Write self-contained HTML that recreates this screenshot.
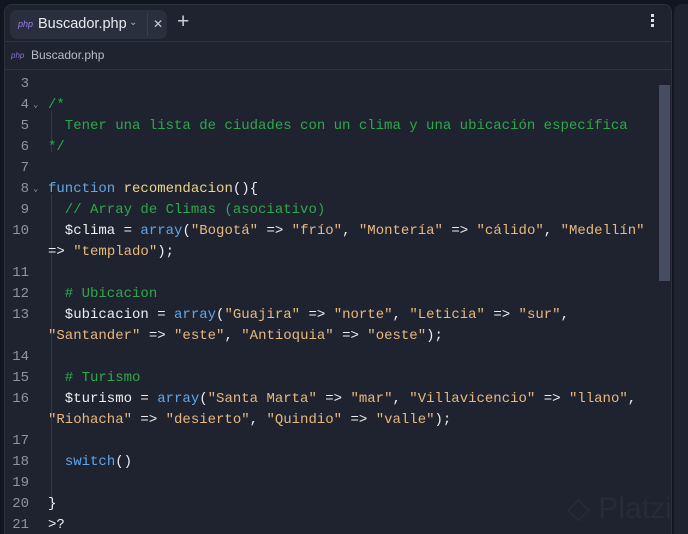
<!DOCTYPE html>
<html><head><meta charset="utf-8"><style>
html,body{margin:0;width:688px;height:534px;background:#11151f;overflow:hidden;position:relative;font-family:"Liberation Sans",sans-serif}
.panel{position:absolute;left:4px;top:4px;width:666px;height:540px;background:#1f2330;border:1px solid #2c3140;border-radius:8px;overflow:hidden}
.right{position:absolute;left:674px;top:4px;width:20px;height:540px;background:#1f2330;border-radius:8px}
.tabbar{position:absolute;left:0;top:0;width:666px;height:36px;border-bottom:1px solid #2e3342}
.tab{position:absolute;left:5px;top:5px;width:157px;height:29px;background:#2a2f3d;border-radius:7px}
.tab .php{position:absolute;left:8px;top:9px;font-size:9px;color:#9a7cf0;font-style:italic}
.tab .name{position:absolute;left:28px;top:6px;font-size:14.5px;color:#e8eaf0}
.tab .chev{position:absolute;left:119px;top:7px;font-size:10px;color:#aab}
.tab .sep{position:absolute;left:137px;top:3px;width:1px;height:23px;background:#3a3f4e}
.tab .x{position:absolute;left:143px;top:7px;font-size:12px;color:#ccd}
.plus{position:absolute;left:172px;top:5px;font-size:21px;color:#ccd}
.dots{position:absolute;left:646px;top:9px;width:3px}
.dots i{display:block;width:3px;height:3px;background:#dde;margin-bottom:2px}
.crumb{position:absolute;left:0;top:37px;width:666px;height:27px;border-bottom:1px solid #2e3342}
.crumb .php{position:absolute;left:6px;top:9px;font-size:8px;color:#8a6fd8;font-style:italic}
.crumb .name{position:absolute;left:26px;top:6px;font-size:12px;color:#b8bcc8}
.code{position:absolute;left:1px;top:68px;font-family:"Liberation Mono","DejaVu Sans Mono",monospace;font-size:14px;color:#eceef2}
.row{position:absolute;height:21px;line-height:21px;white-space:pre;left:42px}
.ln{position:absolute;width:23px;text-align:right;left:0;color:#8e94a2;height:21px;line-height:21px;font-size:14px}
.fold{position:absolute;left:27px;color:#8e94a2;font-size:9px}
.c{color:#2fa84a}.s{color:#e8b97e}.k{color:#62a6e8}.f{color:#ecd68c}
.guide{position:absolute;left:46px;width:1px;background:#343949}
.sb{position:absolute;left:654px;top:80px;width:11px;height:196px;background:#474d61}
.wm{position:absolute;left:562px;top:486px;font-size:30px;color:#262b36;font-family:"Liberation Sans",sans-serif;white-space:nowrap}
</style></head><body>
<div class="panel">
 <div class="tabbar">
  <div class="tab"><span class="php">php</span><span class="name">Buscador.php</span><span class="chev">⌄</span><span class="sep"></span><span class="x">✕</span></div>
  <div class="plus">+</div>
  <div class="dots"><i></i><i></i><i></i></div>
 </div>
 <div class="crumb"><span class="php">php</span><span class="name">Buscador.php</span></div>
 <div class="sb"></div>
 <div class="wm">◇ Platzi</div>
 <div class="guide" style="top:105px;height:42px"></div>
 <div class="guide" style="top:189px;height:315px"></div>
 <div class="code" style="top:-3px">
  <div class="ln" style="top:72px">3</div>
  <div class="ln" style="top:93px">4</div><span class="fold" style="top:93px;line-height:21px">⌄</span><div class="row" style="top:93px"><span class="c">/*</span></div>
  <div class="ln" style="top:114px">5</div><div class="row" style="top:114px"><span class="c">  Tener una lista de ciudades con un clima y una ubicación específica</span></div>
  <div class="ln" style="top:135px">6</div><div class="row" style="top:135px"><span class="c">*/</span></div>
  <div class="ln" style="top:156px">7</div>
  <div class="ln" style="top:177px">8</div><span class="fold" style="top:177px;line-height:21px">⌄</span><div class="row" style="top:177px"><span class="k">function</span> <span class="f">recomendacion</span>(){</div>
  <div class="ln" style="top:198px">9</div><div class="row" style="top:198px"><span class="c">  // Array de Climas (asociativo)</span></div>
  <div class="ln" style="top:219px">10</div><div class="row" style="top:219px">  $clima = <span class="k">array</span>(<span class="s">"Bogotá"</span> => <span class="s">"frío"</span>, <span class="s">"Montería"</span> => <span class="s">"cálido"</span>, <span class="s">"Medellín"</span></div>
  <div class="row" style="top:240px">=> <span class="s">"templado"</span>);</div>
  <div class="ln" style="top:261px">11</div>
  <div class="ln" style="top:282px">12</div><div class="row" style="top:282px"><span class="c">  # Ubicacion</span></div>
  <div class="ln" style="top:303px">13</div><div class="row" style="top:303px">  $ubicacion = <span class="k">array</span>(<span class="s">"Guajira"</span> => <span class="s">"norte"</span>, <span class="s">"Leticia"</span> => <span class="s">"sur"</span>,</div>
  <div class="row" style="top:324px"><span class="s">"Santander"</span> => <span class="s">"este"</span>, <span class="s">"Antioquia"</span> => <span class="s">"oeste"</span>);</div>
  <div class="ln" style="top:345px">14</div>
  <div class="ln" style="top:366px">15</div><div class="row" style="top:366px"><span class="c">  # Turismo</span></div>
  <div class="ln" style="top:387px">16</div><div class="row" style="top:387px">  $turismo = <span class="k">array</span>(<span class="s">"Santa Marta"</span> => <span class="s">"mar"</span>, <span class="s">"Villavicencio"</span> => <span class="s">"llano"</span>,</div>
  <div class="row" style="top:408px"><span class="s">"Riohacha"</span> => <span class="s">"desierto"</span>, <span class="s">"Quindio"</span> => <span class="s">"valle"</span>);</div>
  <div class="ln" style="top:429px">17</div>
  <div class="ln" style="top:450px">18</div><div class="row" style="top:450px">  <span class="k">switch</span>()</div>
  <div class="ln" style="top:471px">19</div>
  <div class="ln" style="top:492px">20</div><div class="row" style="top:492px">}</div>
  <div class="ln" style="top:513px">21</div><div class="row" style="top:513px">&gt;?</div>
 </div>
</div>
<div class="right"></div>
</body></html>
